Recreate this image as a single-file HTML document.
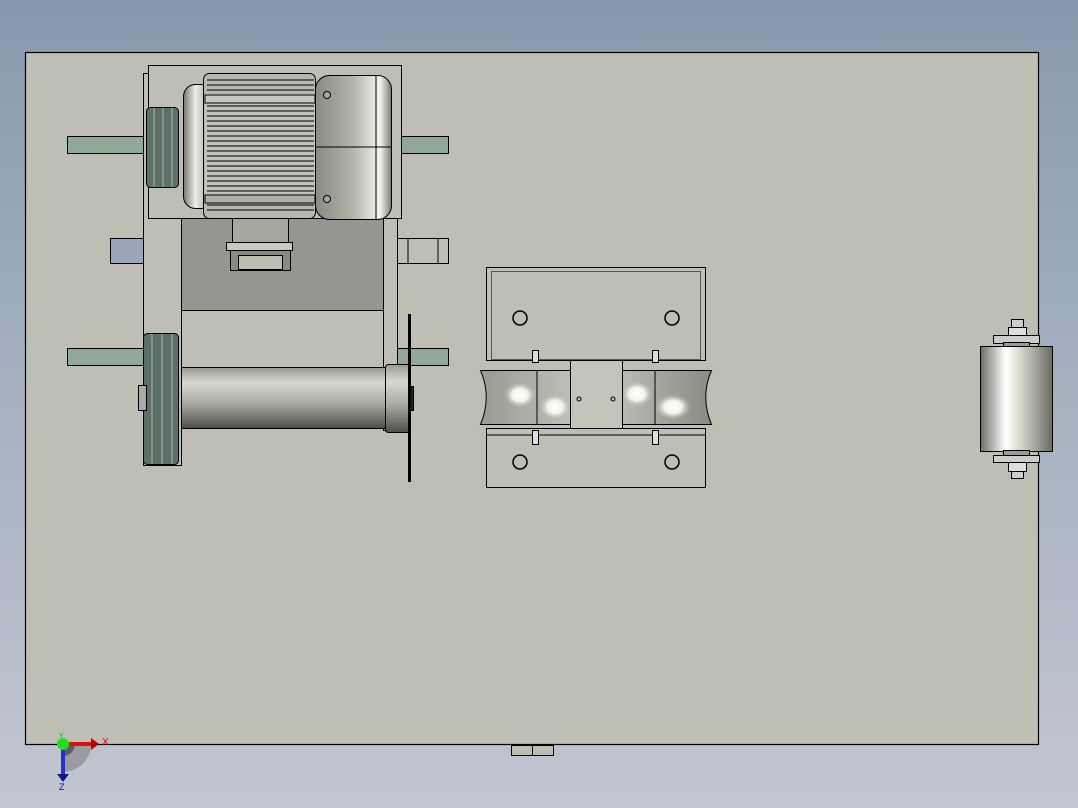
<!DOCTYPE html><html><head><style>html,body{margin:0;padding:0}body{width:1078px;height:808px;overflow:hidden;background:linear-gradient(#8898ac,#a3afbf 45%,#c2c6d0)}</style></head><body>
<svg width="1078" height="808" viewBox="0 0 1078 808" xmlns="http://www.w3.org/2000/svg" style="display:block">
<defs>
<linearGradient id="cylV" x1="0" y1="0" x2="0" y2="1"><stop offset="0" stop-color="#9a9a90"/><stop offset=".25" stop-color="#d8d8cf"/><stop offset=".6" stop-color="#a8a89e"/><stop offset="1" stop-color="#4e4e48"/></linearGradient>
<linearGradient id="cylH" x1="0" y1="0" x2="1" y2="0"><stop offset="0" stop-color="#6e6e66"/><stop offset=".35" stop-color="#ffffff"/><stop offset=".55" stop-color="#d8d8cc"/><stop offset="1" stop-color="#6a6a62"/></linearGradient>
<linearGradient id="cap" x1="0" y1="0" x2="1" y2="0"><stop offset="0" stop-color="#8a8a82"/><stop offset=".5" stop-color="#b4b4aa"/><stop offset=".85" stop-color="#f4f4ee"/><stop offset="1" stop-color="#7a7a72"/></linearGradient>
<linearGradient id="front" x1="0" y1="0" x2="1" y2="0"><stop offset="0" stop-color="#77776f"/><stop offset=".4" stop-color="#eeeee8"/><stop offset="1" stop-color="#8a8a82"/></linearGradient>
<radialGradient id="glow"><stop offset="0" stop-color="#fff"/><stop offset=".5" stop-color="#f4f4ec"/><stop offset="1" stop-color="#b8b8ae" stop-opacity="0"/></radialGradient>
<linearGradient id="roll" x1="0" y1="0" x2="1" y2="0"><stop offset="0" stop-color="#9a9a92"/><stop offset=".5" stop-color="#c8c8c0"/><stop offset="1" stop-color="#8a8a82"/></linearGradient>
</defs>
<rect x="25.5" y="52.5" width="1013" height="692" fill="#bfbeb4" stroke="#000" stroke-width="1.2"/>
<rect x="511.5" y="745.5" width="42" height="10" fill="#bfbeb4" stroke="#000"/><line x1="532.5" y1="745" x2="532.5" y2="755" stroke="#000"/>
<g stroke="#000" stroke-width="1">
<rect x="67.5" y="136.5" width="76" height="17" fill="#8fa89b"/><rect x="401.5" y="136.5" width="47" height="17" fill="#8fa89b"/>
<rect x="67.5" y="348.5" width="76" height="17" fill="#8fa89b"/><rect x="397.5" y="348.5" width="51" height="17" fill="#8fa89b"/>
<rect x="110.5" y="238.5" width="33" height="25" fill="#9aa6ba"/>
<rect x="397.5" y="238.5" width="51" height="25" fill="#bfbeb4"/><line x1="408" y1="238" x2="408" y2="263"/><line x1="438" y1="238" x2="438" y2="263"/>
<rect x="143.5" y="73.5" width="38" height="392" fill="#bfbeb4"/>
<rect x="383.5" y="218.5" width="14" height="212" fill="#bfbeb4"/>
<rect x="181.5" y="218.5" width="202" height="92" fill="#969690"/>
<rect x="181.5" y="310.5" width="202" height="57" fill="#bfbeb4"/>
<rect x="148.5" y="65.5" width="253" height="153" fill="#bfbeb4"/>
<rect x="232.5" y="218.5" width="56" height="26" fill="#a8a8a0"/>
<rect x="226.5" y="242.5" width="66" height="8" fill="#c8c8c0"/>
<rect x="230.5" y="250.5" width="60" height="20" fill="#8a8a84"/>
<rect x="238.5" y="255.5" width="44" height="14" fill="#bdbdb4"/>
<rect x="183.5" y="84.5" width="30" height="124" rx="12" fill="url(#front)"/>
<rect x="203.5" y="73.5" width="112" height="145" rx="6" fill="#b8b8b0"/>
<rect x="205" y="94" width="110" height="104" fill="#c2c2ba" stroke="none"/>
<g stroke="#222" stroke-width="1.2">
<line x1="207" y1="106" x2="314" y2="106"/><line x1="207" y1="111" x2="314" y2="111"/><line x1="207" y1="116" x2="314" y2="116"/><line x1="207" y1="121" x2="314" y2="121"/><line x1="207" y1="126" x2="314" y2="126"/><line x1="207" y1="131" x2="314" y2="131"/><line x1="207" y1="136" x2="314" y2="136"/><line x1="207" y1="141" x2="314" y2="141"/><line x1="207" y1="146" x2="314" y2="146"/><line x1="207" y1="151" x2="314" y2="151"/><line x1="207" y1="156" x2="314" y2="156"/><line x1="207" y1="161" x2="314" y2="161"/><line x1="207" y1="166" x2="314" y2="166"/><line x1="207" y1="171" x2="314" y2="171"/><line x1="207" y1="176" x2="314" y2="176"/><line x1="207" y1="181" x2="314" y2="181"/><line x1="207" y1="186" x2="314" y2="186"/><line x1="207" y1="191" x2="314" y2="191"/>
<line x1="207" y1="80" x2="314" y2="80"/><line x1="207" y1="85" x2="314" y2="85"/><line x1="207" y1="90" x2="314" y2="90"/><line x1="207" y1="205" x2="314" y2="205"/><line x1="207" y1="210" x2="314" y2="210"/>
</g>
<rect x="205" y="95" width="110" height="8" fill="#c8c8c0"/>
<rect x="205" y="195" width="110" height="8" fill="#b0b0a8"/>
<rect x="315.5" y="75.5" width="76" height="144" rx="14" fill="url(#cap)"/>
<line x1="315" y1="147" x2="391" y2="147"/>
<line x1="376" y1="76" x2="376" y2="219"/>
<circle cx="327" cy="95" r="3.5" fill="#aaa"/><circle cx="327" cy="199" r="3.5" fill="#aaa"/>
<rect x="146.5" y="107.5" width="32" height="80" rx="4" fill="#5d7068"/>
<line x1="154" y1="108" x2="154" y2="187" stroke="#a9bbb3"/><line x1="163" y1="108" x2="163" y2="187" stroke="#a9bbb3"/><line x1="172" y1="108" x2="172" y2="187" stroke="#a9bbb3"/>
<rect x="143.5" y="333.5" width="35" height="131" rx="4" fill="#5d7068"/>
<line x1="152" y1="334" x2="152" y2="464" stroke="#a9bbb3"/><line x1="162" y1="334" x2="162" y2="464" stroke="#a9bbb3"/><line x1="172" y1="334" x2="172" y2="464" stroke="#a9bbb3"/>
<rect x="138.5" y="385.5" width="8" height="25" fill="#aaa"/>
<rect x="181.5" y="367.5" width="204" height="61" fill="url(#cylV)"/>
<rect x="385.5" y="364.5" width="25" height="68" rx="3" fill="url(#cylV)"/>
<rect x="410.5" y="386.5" width="3" height="24" fill="#222"/>
<line x1="409.5" y1="314" x2="409.5" y2="482" stroke-width="3"/>
<rect x="486.5" y="267.5" width="219" height="93" fill="#bfbeb4"/>
<rect x="491.5" y="271.5" width="209" height="88" fill="none" stroke="#555"/>
<circle cx="520" cy="318" r="7" fill="none" stroke-width="1.5"/><circle cx="672" cy="318" r="7" fill="none" stroke-width="1.5"/>
<rect x="532.5" y="350.5" width="6" height="12" fill="#ddd"/><rect x="652.5" y="350.5" width="6" height="12" fill="#ddd"/>
<path d="M480.5 370.5 H711.5 Q700 397 711.5 424.5 H480.5 Q492 397 480.5 370.5Z" fill="url(#roll)"/>
<line x1="537" y1="371" x2="537" y2="424"/><line x1="655" y1="371" x2="655" y2="424"/>
<ellipse cx="520" cy="395" rx="16" ry="13" fill="url(#glow)" stroke="none"/>
<ellipse cx="555" cy="407" rx="16" ry="13" fill="url(#glow)" stroke="none"/>
<ellipse cx="637" cy="394" rx="16" ry="13" fill="url(#glow)" stroke="none"/>
<ellipse cx="673" cy="407" rx="18" ry="13" fill="url(#glow)" stroke="none"/>
<rect x="486.5" y="428.5" width="219" height="59" fill="#bfbeb4"/>
<line x1="486" y1="435" x2="705" y2="435"/>
<rect x="532.5" y="430.5" width="6" height="14" fill="#ddd"/><rect x="652.5" y="430.5" width="6" height="14" fill="#ddd"/>
<circle cx="520" cy="462" r="7" fill="none" stroke-width="1.5"/><circle cx="672" cy="462" r="7" fill="none" stroke-width="1.5"/>
<rect x="570.5" y="360.5" width="52" height="68" fill="#c4c4bb"/>
<circle cx="579" cy="399" r="2" fill="none"/><circle cx="613" cy="399" r="2" fill="none"/>
<rect x="1011.5" y="319.5" width="12" height="8" fill="#ccc"/><rect x="1008.5" y="327.5" width="18" height="9" fill="#ddd"/>
<rect x="993.5" y="335.5" width="46" height="8" fill="#ccc"/><rect x="1003.5" y="342.5" width="26" height="5" fill="#999"/>
<rect x="980.5" y="346.5" width="72" height="105" fill="url(#cylH)"/>
<rect x="1003.5" y="450.5" width="26" height="5" fill="#999"/><rect x="993.5" y="455.5" width="46" height="7" fill="#ccc"/>
<rect x="1008.5" y="462.5" width="18" height="9" fill="#ddd"/><rect x="1011.5" y="471.5" width="12" height="7" fill="#ccc"/>
</g>
<path d="M63 744 L91 744 A28 28 0 0 1 63 772 Z" fill="#7a7a80" opacity=".55"/>
<path d="M63 744 L75 744 A12 12 0 0 1 63 756 Z" fill="#444" opacity=".7"/>
<rect x="61" y="744" width="4" height="30" fill="#2830d0"/><path d="M57 774 L69 774 L63 782Z" fill="#101880"/>
<rect x="63" y="742" width="28" height="4" fill="#e01010"/><path d="M91 738 L99 744 L91 750Z" fill="#b00"/>
<circle cx="63" cy="744" r="6" fill="#20e020"/>
<text x="102" y="745" font-family="Liberation Sans,sans-serif" font-size="10" fill="#e00">X</text>
<text x="59" y="790" font-family="Liberation Sans,sans-serif" font-size="9" fill="#00c">Z</text>
<text x="59" y="738" font-family="Liberation Sans,sans-serif" font-size="7" fill="#0a0">Y</text>
</svg>
</body></html>
